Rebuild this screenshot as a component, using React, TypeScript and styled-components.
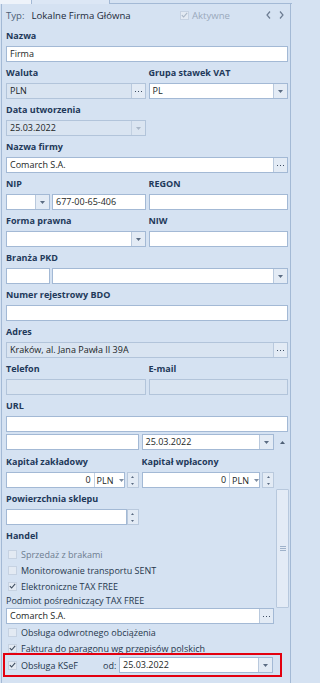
import React from "react";
import styled, { createGlobalStyle } from "styled-components";

const BG = "#d5e2f2";
const LINE = "#a3b9d5";

const GlobalStyle = createGlobalStyle`
  html, body { margin: 0; padding: 0; background: ${BG}; }
  body { font-family: "Open Sans", "Noto Sans", sans-serif; }
  * { box-sizing: border-box; }
`;

const Frame = styled.div`
  width: 292px;
  height: 683px;
  overflow: hidden;
  display: flex;
  flex-direction: column;
  background: ${BG};
  font-size: 9px;
  color: #1f2d3d;
`;

const TabStrip = styled.div`
  height: 4px;
  flex: none;
  display: flex;
`;

const Tab = styled.div<{ $w: number; $light?: boolean }>`
  width: ${(p) => p.$w}px;
  height: 4px;
  flex: none;
  background: ${(p) => (p.$light ? "#eef3fa" : "#dce7f5")};
  border-right: 1px solid ${LINE};
`;

const TabRest = styled.div`
  flex: 1;
  border-bottom: 1px solid ${LINE};
`;

const Panel = styled.div`
  flex: 1;
  margin: 0 1px;
  border-left: 1px solid ${LINE};
  border-right: 1px solid ${LINE};
  display: flex;
  flex-direction: column;
  min-height: 0;
`;

const Top = styled.div`
  padding: 0 2px 0 4px;
  display: flex;
  flex-direction: column;
  flex: none;
`;

const Header = styled.div`
  height: 22px;
  display: flex;
  align-items: center;
  font-size: 9.6px;
`;

const TypLabel = styled.span`
  color: #4d5f77;
  margin-right: 7px;
`;

const TypValue = styled.span`
  color: #1c2a3b;
  flex: 1;
`;

const Aktywne = styled.span`
  display: flex;
  align-items: center;
  gap: 3px;
  color: #9aa9bc;
  margin-right: 36px;
`;

const Nav = styled.span`
  display: flex;
  align-items: center;
  gap: 8px;
  margin-right: 4px;
`;

const Field = styled.div`
  display: flex;
  flex-direction: column;
  min-width: 0;
  margin-bottom: 1px;
`;

const Label = styled.div<{ $plain?: boolean; $h?: number }>`
  height: ${(p) => p.$h ?? 20}px;
  line-height: ${(p) => p.$h ?? 20}px;
  flex: none;
  font-weight: ${(p) => (p.$plain ? 400 : 700)};
  color: ${(p) => (p.$plain ? "#26384e" : "#22395a")};
  white-space: nowrap;
`;

const Cols = styled.div`
  display: grid;
  grid-template-columns: 1fr 1fr;
  column-gap: 3px;
`;

const Line = styled.div<{ $gap?: number }>`
  display: flex;
  gap: ${(p) => p.$gap ?? 2}px;
  height: 16px;
  flex: none;
`;

const Box = styled.div<{ $disabled?: boolean; $w?: number }>`
  height: 16px;
  min-height: 16px;
  max-height: 16px;
  border: 1px solid ${(p) => (p.$disabled ? "#b2c4da" : LINE)};
  background: ${(p) => (p.$disabled ? "#d9e4f1" : "#ffffff")};
  display: flex;
  align-items: stretch;
  flex: ${(p) => (p.$w ? `0 0 ${p.$w}px` : "1 1 0")};
  min-width: 0;
`;

const Text = styled.span<{ $right?: boolean }>`
  flex: 1;
  padding: 0 3px;
  line-height: 14px;
  white-space: nowrap;
  overflow: hidden;
  text-align: ${(p) => (p.$right ? "right" : "left")};
  color: #1b1f26;
`;

const Unit = styled.span`
  flex: 0 0 29px;
  border-left: 1px solid #c3d1e3;
  display: flex;
  align-items: center;
  gap: 5px;
  padding-left: 2px;
  color: #1b1f26;
`;

const Btn = styled.span<{ $disabled?: boolean }>`
  width: 14px;
  flex: none;
  border-left: 1px solid ${(p) => (p.$disabled ? "#c2d0e1" : "#b9c9dd")};
  background: ${(p) => (p.$disabled ? "#dbe5f1" : "#e3ebf5")};
  display: flex;
  align-items: center;
  justify-content: center;
`;

const Spin = styled.span`
  width: 12px;
  height: 16px;
  flex: none;
  border: 1px solid #b9c9dd;
  background: #e3ebf5;
  display: flex;
  align-items: center;
  justify-content: center;
`;

const ScrollArea = styled.div`
  flex: 1;
  display: flex;
  padding-left: 4px;
  min-height: 0;
`;

const ScrollContent = styled.div`
  flex: 1;
  display: flex;
  flex-direction: column;
  padding-top: 1px;
  min-width: 0;
`;

const Gap = styled.div<{ $h: number }>`
  height: ${(p) => p.$h}px;
  flex: none;
`;

const ScrollBar = styled.div`
  width: 15px;
  margin-left: 1px;
  display: flex;
  flex-direction: column;
  align-items: center;
  flex: none;
`;

const ScrollArrow = styled.div`
  height: 18px;
  width: 100%;
  flex: none;
  display: flex;
  align-items: center;
  justify-content: center;
`;

const Thumb = styled.div`
  margin-top: 38px;
  width: 13px;
  height: 119px;
  flex: none;
  border: 1px solid #b7c8dd;
  background: #e3ebf6;
  border-radius: 1px;
  display: flex;
  align-items: center;
  justify-content: center;
`;

const CheckRow = styled.div<{ $muted?: boolean }>`
  height: 16px;
  flex: none;
  display: flex;
  align-items: center;
  gap: 4px;
  padding-left: 2px;
  color: ${(p) => (p.$muted ? "#6d7d90" : "#27384d")};
  white-space: nowrap;
`;

const CheckBox = styled.span`
  width: 9px;
  height: 9px;
  flex: none;
  border: 1px solid #c6d2e2;
  background: #e3eaf3;
  display: flex;
  align-items: center;
  justify-content: center;
`;

const KsefRow = styled.div`
  position: relative;
  height: 18px;
  flex: none;
  display: flex;
  align-items: center;
  margin-right: 1px;
`;

const KsefCheck = styled(CheckRow)`
  width: 97px;
`;

const Od = styled.span`
  width: 16px;
  flex: none;
  color: #27384d;
`;

const Highlight = styled.div`
  position: absolute;
  left: -3px;
  right: -9px;
  top: -3px;
  bottom: -3px;
  border: 2px solid #e3000f;
  pointer-events: none;
`;

const Arrow = ({ c = "#5b6c83" }: { c?: string }) => (
  <svg width="5" height="3" viewBox="0 0 5 3">
    <path d="M0 0h5L2.5 3z" fill={c} />
  </svg>
);

const Dots = () => (
  <svg width="7" height="1" viewBox="0 0 7 1">
    <rect x="0" y="0" width="1" height="1" fill="#3f4f64" />
    <rect x="3" y="0" width="1" height="1" fill="#3f4f64" />
    <rect x="6" y="0" width="1" height="1" fill="#3f4f64" />
  </svg>
);

const SpinIcon = () => (
  <svg width="3" height="9" viewBox="0 0 3 9">
    <path d="M0 2h3L1.5 0z" fill="#5b6c83" />
    <path d="M0 7h3L1.5 9z" fill="#5b6c83" />
  </svg>
);

const Check = ({ c = "#3e4c5e" }: { c?: string }) => (
  <svg width="7" height="6" viewBox="0 0 7 6">
    <path d="M0.8 3.2 L2.6 5 L6.2 0.8" stroke={c} strokeWidth="1.1" fill="none" />
  </svg>
);

const Chevron = ({ dir }: { dir: "l" | "r" }) => (
  <svg width="5" height="8" viewBox="0 0 5 8">
    <path
      d={dir === "l" ? "M4 0.5 L1 4 L4 7.5" : "M1 0.5 L4 4 L1 7.5"}
      stroke="#6c7c92"
      strokeWidth="1.2"
      fill="none"
    />
  </svg>
);

const Grip = () => (
  <svg width="6" height="5" viewBox="0 0 6 5">
    <rect x="0" y="0" width="6" height="1" fill="#9fb2ca" />
    <rect x="0" y="2" width="6" height="1" fill="#9fb2ca" />
    <rect x="0" y="4" width="6" height="1" fill="#9fb2ca" />
  </svg>
);

const UpArrow = () => (
  <svg width="5" height="3" viewBox="0 0 5 3">
    <path d="M0 3h5L2.5 0z" fill="#4e5f75" />
  </svg>
);

export default function App() {
  return (
    <>
      <GlobalStyle />
      <Frame>
        <TabStrip>
          <Tab $w={32} $light />
          <Tab $w={78} />
          <TabRest />
        </TabStrip>
        <Panel>
          <Top>
            <Header>
              <TypLabel>Typ:</TypLabel>
              <TypValue>Lokalne Firma Główna</TypValue>
              <Aktywne>
                <CheckBox>
                  <Check c="#a9b6c6" />
                </CheckBox>
                Aktywne
              </Aktywne>
              <Nav>
                <Chevron dir="l" />
                <Chevron dir="r" />
              </Nav>
            </Header>

            <Field>
              <Label>Nazwa</Label>
              <Box>
                <Text>Firma</Text>
              </Box>
            </Field>

            <Cols>
              <Field>
                <Label>Waluta</Label>
                <Box $disabled>
                  <Text>PLN</Text>
                  <Btn>
                    <Dots />
                  </Btn>
                </Box>
              </Field>
              <Field>
                <Label>Grupa stawek VAT</Label>
                <Box>
                  <Text>PL</Text>
                  <Btn>
                    <Arrow />
                  </Btn>
                </Box>
              </Field>
            </Cols>

            <Cols>
              <Field>
                <Label>Data utworzenia</Label>
                <Box $disabled>
                  <Text>25.03.2022</Text>
                  <Btn $disabled>
                    <Arrow c="#aab7c8" />
                  </Btn>
                </Box>
              </Field>
            </Cols>

            <Field>
              <Label>Nazwa firmy</Label>
              <Box>
                <Text>Comarch S.A.</Text>
                <Btn>
                  <Dots />
                </Btn>
              </Box>
            </Field>

            <Cols>
              <Field>
                <Label>NIP</Label>
                <Line>
                  <Box $w={44}>
                    <Text />
                    <Btn>
                      <Arrow />
                    </Btn>
                  </Box>
                  <Box>
                    <Text>677-00-65-406</Text>
                  </Box>
                </Line>
              </Field>
              <Field>
                <Label>REGON</Label>
                <Box />
              </Field>
            </Cols>

            <Cols>
              <Field>
                <Label>Forma prawna</Label>
                <Box>
                  <Text />
                  <Btn>
                    <Arrow />
                  </Btn>
                </Box>
              </Field>
              <Field>
                <Label>NIW</Label>
                <Box />
              </Field>
            </Cols>

            <Field>
              <Label>Branża PKD</Label>
              <Line>
                <Box $w={44} />
                <Box>
                  <Text />
                  <Btn>
                    <Arrow />
                  </Btn>
                </Box>
              </Line>
            </Field>

            <Field>
              <Label>Numer rejestrowy BDO</Label>
              <Box />
            </Field>

            <Field>
              <Label>Adres</Label>
              <Box $disabled>
                <Text>Kraków, al. Jana Pawła II 39A</Text>
                <Btn>
                  <Dots />
                </Btn>
              </Box>
            </Field>

            <Cols>
              <Field>
                <Label>Telefon</Label>
                <Box $disabled />
              </Field>
              <Field>
                <Label>E-mail</Label>
                <Box $disabled />
              </Field>
            </Cols>

            <Field>
              <Label>URL</Label>
              <Box />
            </Field>
          </Top>

          <ScrollArea>
            <ScrollContent>
              <Cols>
                <Box />
                <Box>
                  <Text>25.03.2022</Text>
                  <Btn>
                    <Arrow />
                  </Btn>
                </Box>
              </Cols>
              <Gap $h={2} />

              <Cols>
                <Field>
                  <Label>Kapitał zakładowy</Label>
                  <Line>
                    <Box>
                      <Text $right>0</Text>
                      <Unit>
                        PLN
                        <Arrow c="#7e8ea3" />
                      </Unit>
                    </Box>
                    <Spin>
                      <SpinIcon />
                    </Spin>
                  </Line>
                </Field>
                <Field>
                  <Label>Kapitał wpłacony</Label>
                  <Line>
                    <Box>
                      <Text $right>0</Text>
                      <Unit>
                        PLN
                        <Arrow c="#7e8ea3" />
                      </Unit>
                    </Box>
                    <Spin>
                      <SpinIcon />
                    </Spin>
                  </Line>
                </Field>
              </Cols>

              <Cols>
                <Field>
                  <Label>Powierzchnia sklepu</Label>
                  <Line $gap={0}>
                    <Box />
                    <Spin>
                      <SpinIcon />
                    </Spin>
                  </Line>
                </Field>
              </Cols>

              <Label>Handel</Label>
              <CheckRow $muted>
                <CheckBox />
                Sprzedaż z brakami
              </CheckRow>
              <CheckRow>
                <CheckBox />
                Monitorowanie transportu SENT
              </CheckRow>
              <CheckRow>
                <CheckBox>
                  <Check />
                </CheckBox>
                Elektroniczne TAX FREE
              </CheckRow>
              <Label $plain $h={14}>
                Podmiot pośredniczący TAX FREE
              </Label>
              <Line>
                <Box>
                  <Text>Comarch S.A.</Text>
                  <Btn>
                    <Dots />
                  </Btn>
                </Box>
              </Line>
              <CheckRow>
                <CheckBox />
                Obsługa odwrotnego obciążenia
              </CheckRow>
              <CheckRow>
                <CheckBox>
                  <Check />
                </CheckBox>
                Faktura do paragonu wg przepisów polskich
              </CheckRow>
              <KsefRow>
                <KsefCheck>
                  <CheckBox>
                    <Check />
                  </CheckBox>
                  Obsługa KSeF
                </KsefCheck>
                <Od>od:</Od>
                <Box>
                  <Text>25.03.2022</Text>
                  <Btn>
                    <Arrow />
                  </Btn>
                </Box>
                <Highlight />
              </KsefRow>
            </ScrollContent>
            <ScrollBar>
              <ScrollArrow>
                <UpArrow />
              </ScrollArrow>
              <Thumb>
                <Grip />
              </Thumb>
            </ScrollBar>
          </ScrollArea>
        </Panel>
      </Frame>
    </>
  );
}
